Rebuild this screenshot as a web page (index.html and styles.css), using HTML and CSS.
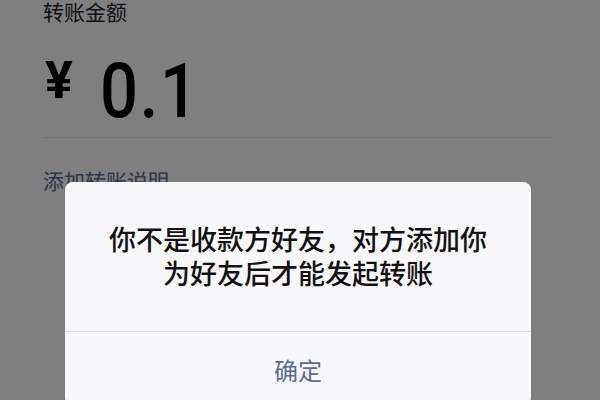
FILE: index.html
```html
<!DOCTYPE html>
<html lang="zh-CN">
<head>
<meta charset="utf-8">
<title>转账</title>
<link rel="stylesheet" href="styles.css">
</head>
<body>
<div class="page">
  <div class="label">转账金额</div>
  <div class="amount">
    <span class="currency">¥</span>
    <span class="value">0.1</span>
  </div>
  <div class="divider"></div>
  <div class="note">添加转账说明</div>
</div>
<div class="mask"></div>
<div class="dialog">
  <div class="dialog-body">你不是收款方好友，对方添加你<br>为好友后才能发起转账</div>
  <div class="dialog-footer">
    <span class="dialog-btn">确定</span>
  </div>
</div>
</body>
</html>
```
FILE: styles.css
```css
html, body {
  margin: 0;
  padding: 0;
}
body {
  width: 600px;
  height: 400px;
  overflow: hidden;
  background: #ffffff;
  font-family: "Noto Sans CJK SC", "Noto Sans", sans-serif;
}
.page {
  padding: 0 47px 0 43px;
}
.label {
  font-size: 21px;
  line-height: 21px;
  color: #222222;
  padding-top: 1px;
}
.amount {
  display: flex;
  align-items: flex-start;
  margin-top: 31px;
  color: #000000;
}
.currency {
  font-family: Roboto, "Liberation Sans", sans-serif;
  font-weight: 700;
  font-size: 52px;
  line-height: 52px;
  margin-left: 2px;
  margin-top: 2px;
  width: 55px;
}
.value {
  font-family: Roboto, "Liberation Sans", sans-serif;
  font-weight: 500;
  font-size: 76px;
  line-height: 76px;
  letter-spacing: 2px;
  transform: scaleX(0.88);
  transform-origin: left center;
}
.divider {
  height: 1px;
  background: #e8e8e8;
  margin-top: 8px;
}
.note {
  margin-top: 32px;
  font-size: 21px;
  line-height: 21px;
  color: #576b95;
}
.mask {
  position: fixed;
  inset: 0;
  background: rgba(0, 0, 0, 0.5);
}
.dialog {
  position: fixed;
  left: 65px;
  top: 182px;
  width: 466px;
  background: #f8f7fa;
  border-radius: 8px;
}
.dialog-body {
  padding: 40px 20px 41px;
  text-align: center;
  font-size: 27px;
  line-height: 34px;
  font-weight: 500;
  color: #111111;
}
.dialog-footer {
  border-top: 1px solid #dcdadf;
  height: 74px;
  display: flex;
  align-items: center;
  justify-content: center;
}
.dialog-btn {
  font-size: 24px;
  color: #576b95;
}
```
